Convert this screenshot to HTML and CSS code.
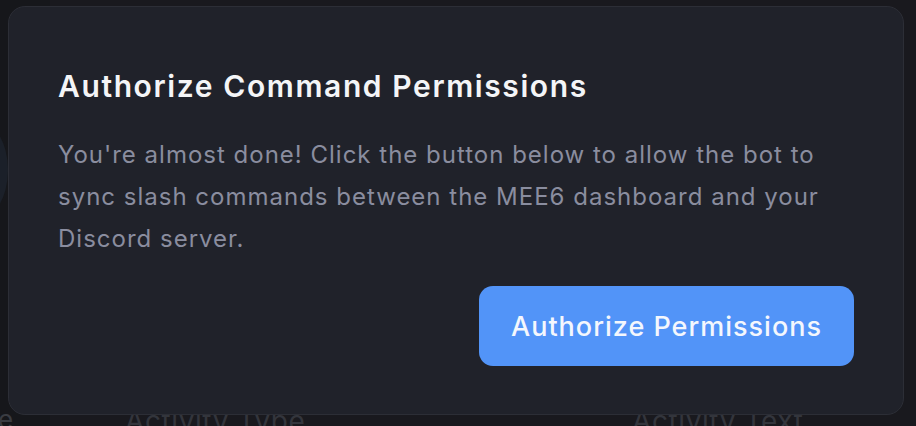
FILE: index.html
```html
<!DOCTYPE html>
<html lang="en">
<head>
<meta charset="utf-8">
<title>Authorize Command Permissions</title>
<link rel="stylesheet" href="styles.css">
</head>
<body>
<div class="page">
  <aside class="rail">
    <div class="blob"></div>
    <span class="rail-letter">e</span>
  </aside>
  <main class="content">
    <div class="fields">
      <div class="field-label type">Activity Type</div>
      <div class="field-label text">Activity Text</div>
    </div>
  </main>
</div>
<div class="modal" role="dialog" aria-labelledby="modal-title">
  <h2 id="modal-title" class="modal-title">Authorize Command Permissions</h2>
  <p class="modal-body">You're almost done! Click the button below to allow the bot to sync slash commands between the MEE6 dashboard and your Discord server.</p>
  <div class="modal-actions">
    <button class="btn-primary" type="button">Authorize Permissions</button>
  </div>
</div>
</body>
</html>
```
FILE: styles.css
```css
* { box-sizing: border-box; }
html, body { margin: 0; padding: 0; }
body {
  width: 916px;
  height: 426px;
  overflow: hidden;
  background: #16171b;
  font-family: "Inter", "Noto Sans", sans-serif;
}
.page {
  display: flex;
  height: 426px;
}
.rail {
  width: 50px;
  position: relative;
  background: #16171b;
}
.blob {
  position: absolute;
  left: -60px;
  top: 118px;
  width: 68px;
  height: 104px;
  border-radius: 50%;
  background: #1b2029;
}
.rail-letter {
  position: absolute;
  left: -2px;
  top: 404px;
  font-size: 26px;
  color: #3a3c42;
}
.content {
  flex: 1;
  background: #19191e;
  padding-top: 404px;
}
.fields {
  display: flex;
  font-size: 28px;
  letter-spacing: 0.6px;
  color: #33353c;
}
.field-label.type { margin-left: 75px; width: 507px; }
.modal {
  position: fixed;
  left: 8px;
  top: 6px;
  width: 896px;
  height: 409px;
  background: #20222a;
  border: 1px solid #2c2e36;
  border-radius: 17px;
  padding: 61px 49px 48px 49px;
  display: flex;
  flex-direction: column;
}
.modal-title {
  margin: 0;
  font-size: 30px;
  line-height: 36px;
  font-weight: 600;
  letter-spacing: 1.6px;
  color: #f4f5f7;
}
.modal-body {
  margin: 30px 0 0;
  max-width: 780px;
  font-size: 24px;
  line-height: 42px;
  letter-spacing: 1px;
  color: #8a8d9f;
}
.modal-actions {
  margin-top: auto;
  display: flex;
  justify-content: flex-end;
}
.btn-primary {
  width: 375px;
  height: 80px;
  border: none;
  border-radius: 14px;
  background: #5294f8;
  color: #f4f7fd;
  font-family: inherit;
  font-size: 27px;
  font-weight: 500;
  letter-spacing: 1px;
  cursor: pointer;
}
```
